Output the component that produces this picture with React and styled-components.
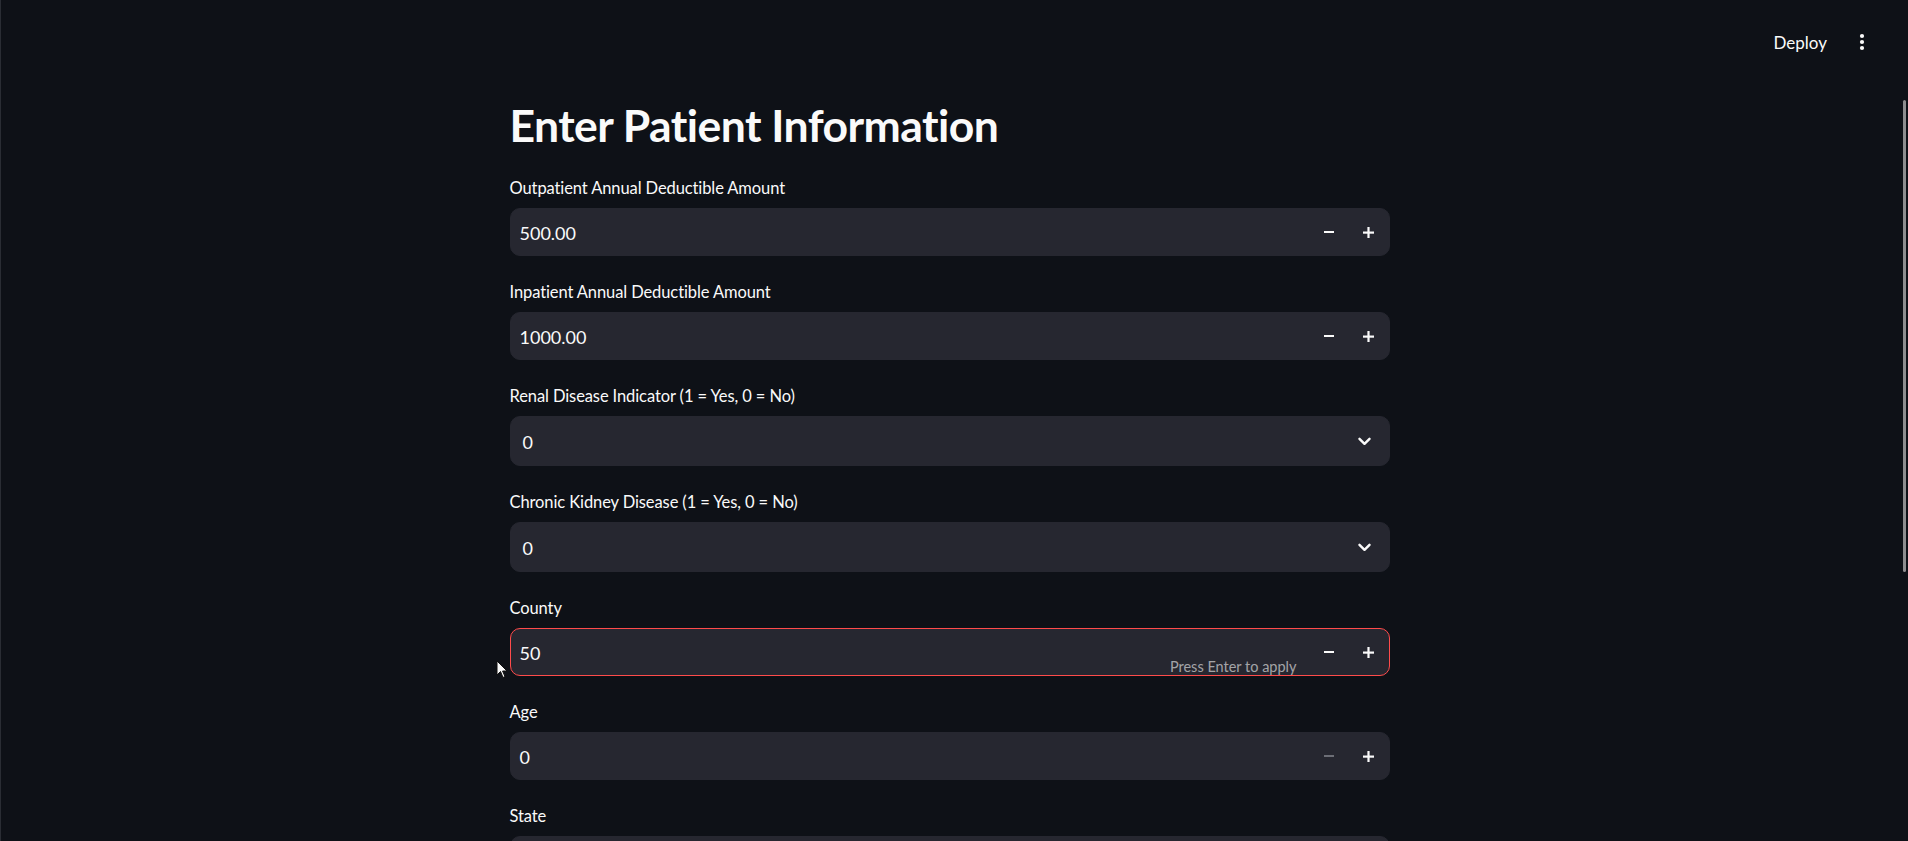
import React from "react";
import styled, { createGlobalStyle } from "styled-components";

const GlobalStyle = createGlobalStyle`
  html, body {
    margin: 0;
    padding: 0;
    background: #0e1117;
    overflow: hidden;
  }
  body {
    font-family: Lato, "Liberation Sans", sans-serif;
    color: #fafafa;
  }
  * { box-sizing: border-box; }
`;

const Page = styled.div`
  position: relative;
  width: 100vw;
  height: 100vh;
  background: #0e1117;
  border-left: 1px solid #2a2d34;
  overflow: hidden;
`;

const Header = styled.header`
  height: 84px;
  display: flex;
  align-items: center;
  justify-content: flex-end;
  gap: 30px;
  padding-right: 41px;
  margin-bottom: 2px;
`;

const DeployButton = styled.button`
  background: transparent;
  border: none;
  color: #fafafa;
  font-family: Lato, "Liberation Sans", sans-serif;
  font-size: 17px;
  padding: 0;
  cursor: pointer;
`;

const MenuButton = styled.button`
  background: transparent;
  border: none;
  padding: 0;
  width: 10px;
  height: 20px;
  display: flex;
  align-items: center;
  justify-content: center;
  cursor: pointer;
`;

const MainWrap = styled.main`
  display: flex;
  justify-content: center;
  padding-right: 10px;
`;

const Column = styled.div`
  width: 880px;
  display: flex;
  flex-direction: column;
  padding-top: 12px;
`;

const Title = styled.h1`
  margin: 0 0 24px 0;
  font-family: Lato, "Liberation Sans", sans-serif;
  font-weight: 700;
  font-size: 44.5px;
  line-height: 54px;
  color: #fafafa;
  letter-spacing: -0.55px;
`;

const Fields = styled.div`
  display: flex;
  flex-direction: column;
  gap: 24px;
`;

const Field = styled.div`
  display: flex;
  flex-direction: column;
  gap: 8px;
`;

const Label = styled.label`
  font-size: 16.5px;
  line-height: 24px;
  color: #fafafa;
  letter-spacing: -0.1px;
`;

const InputBox = styled.div`
  position: relative;
  height: ${(p) => (p.$select ? "50px" : "48px")};
  background: #262730;
  border: 1px solid ${(p) => (p.$focused ? "#ff4b4b" : "#262730")};
  border-radius: 10px;
  display: flex;
  align-items: center;
`;

const Value = styled.span`
  flex: 1;
  padding-left: ${(p) => (p.$select ? "12px" : "9px")};
  padding-top: 1px;
  font-size: 18px;
  color: #fafafa;
`;

const StepButton = styled.button`
  width: 40px;
  height: 100%;
  background: transparent;
  border: none;
  display: flex;
  align-items: center;
  justify-content: center;
  padding: 0;
  color: ${(p) => (p.$disabled ? "#6c6e76" : "#fafafa")};
`;

const Chevron = styled.div`
  width: 44px;
  display: flex;
  align-items: center;
  justify-content: center;
  padding-right: 4px;
`;

const Hint = styled.span`
  position: absolute;
  right: 92px;
  bottom: 0px;
  font-size: 14.5px;
  color: rgba(250, 250, 250, 0.6);
`;

const Scrollbar = styled.div`
  position: absolute;
  right: 2px;
  top: 100px;
  width: 3px;
  height: 472px;
  background: #8d8d8f;
  border-radius: 2px;
`;

const Cursor = styled.svg`
  position: absolute;
  left: 495px;
  top: 660px;
`;

const Minus = () => (
  <svg width="10" height="10" viewBox="0 0 10 10">
    <rect x="0" y="4" width="10" height="2" fill="currentColor" />
  </svg>
);

const Plus = () => (
  <svg width="11" height="11" viewBox="0 0 11 11">
    <rect x="0" y="4.5" width="11" height="2.2" fill="currentColor" />
    <rect x="4.4" y="0" width="2.2" height="11" fill="currentColor" />
  </svg>
);

const ChevronIcon = () => (
  <svg width="13" height="9" viewBox="0 0 13 9">
    <path d="M1.5 1.8 L6.5 6.8 L11.5 1.8" fill="none" stroke="#fafafa" strokeWidth="2.4" strokeLinecap="round" strokeLinejoin="round" />
  </svg>
);

const Dots = () => (
  <svg width="6" height="18" viewBox="0 0 6 18">
    <circle cx="3" cy="3" r="2.1" fill="#fafafa" />
    <circle cx="3" cy="9" r="2.1" fill="#fafafa" />
    <circle cx="3" cy="15" r="2.1" fill="#fafafa" />
  </svg>
);

function NumberInput({ label, value, focused, minDisabled, hint }) {
  return (
    <Field>
      <Label>{label}</Label>
      <InputBox $focused={focused}>
        <Value>{value}</Value>
        {hint && <Hint>{hint}</Hint>}
        <StepButton $disabled={minDisabled}><Minus /></StepButton>
        <StepButton><Plus /></StepButton>
      </InputBox>
    </Field>
  );
}

function SelectInput({ label, value }) {
  return (
    <Field>
      <Label>{label}</Label>
      <InputBox $select>
        <Value $select>{value}</Value>
        <Chevron><ChevronIcon /></Chevron>
      </InputBox>
    </Field>
  );
}

export default function App() {
  return (
    <>
      <GlobalStyle />
      <Page>
        <Header>
          <DeployButton>Deploy</DeployButton>
          <MenuButton><Dots /></MenuButton>
        </Header>
        <MainWrap>
          <Column>
            <Title>Enter Patient Information</Title>
            <Fields>
              <NumberInput label="Outpatient Annual Deductible Amount" value="500.00" />
              <NumberInput label="Inpatient Annual Deductible Amount" value="1000.00" />
              <SelectInput label="Renal Disease Indicator (1 = Yes, 0 = No)" value="0" />
              <SelectInput label="Chronic Kidney Disease (1 = Yes, 0 = No)" value="0" />
              <NumberInput label="County" value="50" focused hint="Press Enter to apply" />
              <NumberInput label="Age" value="0" minDisabled />
              <SelectInput label="State" value="" />
            </Fields>
          </Column>
        </MainWrap>
        <Scrollbar />
        <Cursor width="12" height="19" viewBox="0 0 12 19">
          <path d="M1 1 L1 15 L4.5 11.5 L7 17.5 L9 16.6 L6.6 11 L11 11 Z" fill="#fafafa" stroke="#111" strokeWidth="1" />
        </Cursor>
      </Page>
    </>
  );
}
